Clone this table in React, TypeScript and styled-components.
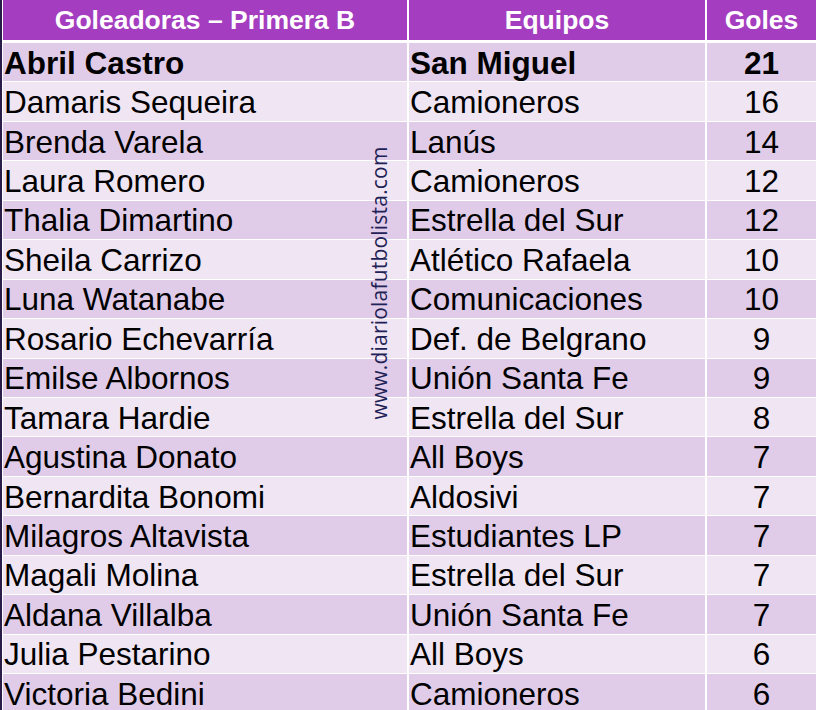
import React from "react";
import styled, { createGlobalStyle } from "styled-components";

const Global = createGlobalStyle`
  html, body { margin: 0; padding: 0; background: #ece0f0; }
  body { font-family: "Liberation Sans", Arial, sans-serif; }
`;

const Frame = styled.div`
  position: relative;
  width: 820px;
  height: 710px;
  overflow: hidden;
  display: flex;
  background: #ece0f0;
`;

const Edge = styled.div`
  width: 2px;
  flex: none;
  background: #2a1c48;
`;

const Table = styled.div`
  flex: 1;
  display: grid;
  grid-template-columns: 404px 296px 109px;
  grid-template-rows: 43px;
  grid-auto-rows: 39.45px;
  column-gap: 2px;
  row-gap: 0;
  background: #ffffff;
  padding: 0 3px 0 1px;
  align-content: start;
`;

const HeadCell = styled.div`
  background: #a43dbf;
  color: #ffffff;
  font-weight: bold;
  font-size: 26.5px;
  display: flex;
  align-items: center;
  justify-content: center;
  border-bottom: 3px solid #ffffff;
  box-sizing: border-box;
  padding-top: 1px;
`;

const Cell = styled.div<{ $alt: boolean; $bold: boolean; $num?: boolean }>`
  background: ${(p) => (p.$alt ? "#f0e5f3" : "#e0cce8")};
  color: #000;
  font-size: 31.5px;
  font-weight: ${(p) => (p.$bold ? "bold" : "normal")};
  display: flex;
  align-items: center;
  justify-content: ${(p) => (p.$num ? "center" : "flex-start")};
  padding-left: ${(p) => (p.$num ? "0" : "1px")};
  padding-top: 2px;
  border-bottom: 1.5px solid #ffffff;
  box-sizing: border-box;
  white-space: nowrap;
`;

const Watermark = styled.div`
  position: absolute;
  left: 379px;
  top: 283px;
  transform: translate(-50%, -50%) rotate(-90deg);
  font-family: "Open Sans", "DejaVu Sans", sans-serif;
  font-size: 21px;
  color: #1f2256;
  white-space: nowrap;
  letter-spacing: 0.2px;
`;

const rows: [string, string, number][] = [
  ["Abril Castro", "San Miguel", 21],
  ["Damaris Sequeira", "Camioneros", 16],
  ["Brenda Varela", "Lanús", 14],
  ["Laura Romero", "Camioneros", 12],
  ["Thalia Dimartino", "Estrella del Sur", 12],
  ["Sheila Carrizo", "Atlético Rafaela", 10],
  ["Luna Watanabe", "Comunicaciones", 10],
  ["Rosario Echevarría", "Def. de Belgrano", 9],
  ["Emilse Albornos", "Unión Santa Fe", 9],
  ["Tamara Hardie", "Estrella del Sur", 8],
  ["Agustina Donato", "All Boys", 7],
  ["Bernardita Bonomi", "Aldosivi", 7],
  ["Milagros Altavista", "Estudiantes LP", 7],
  ["Magali Molina", "Estrella del Sur", 7],
  ["Aldana Villalba", "Unión Santa Fe", 7],
  ["Julia Pestarino", "All Boys", 6],
  ["Victoria Bedini", "Camioneros", 6],
];

export default function App() {
  return (
    <>
      <Global />
      <Frame>
        <Edge />
        <Table>
          <HeadCell>Goleadoras – Primera B</HeadCell>
          <HeadCell>Equipos</HeadCell>
          <HeadCell>Goles</HeadCell>
          {rows.map(([name, team, goals], i) => {
            const alt = i % 2 === 1;
            const bold = i === 0;
            return (
              <React.Fragment key={name}>
                <Cell $alt={alt} $bold={bold}>{name}</Cell>
                <Cell $alt={alt} $bold={bold}>{team}</Cell>
                <Cell $alt={alt} $bold={bold} $num>{goals}</Cell>
              </React.Fragment>
            );
          })}
        </Table>
        <Watermark>www.diariolafutbolista.com</Watermark>
      </Frame>
    </>
  );
}
